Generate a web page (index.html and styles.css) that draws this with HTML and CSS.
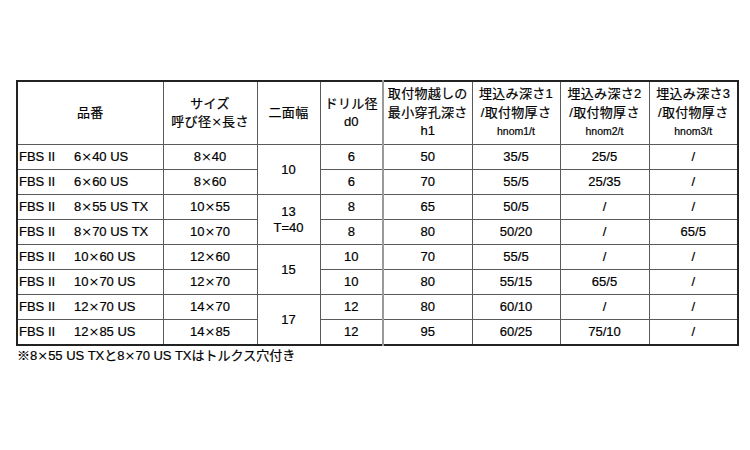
FILE: index.html
```html
<!DOCTYPE html>
<html lang="ja">
<head>
<meta charset="utf-8">
<link rel="stylesheet" href="styles.css">
</head>
<body>
<div class="wrap">
<table class="spec">
<colgroup>
<col class="c1"><col class="c2"><col class="c3"><col class="c4"><col class="c5"><col class="c6"><col class="c7"><col class="c8">
</colgroup>
<thead>
<tr>
<th>品番</th>
<th>サイズ<br>呼び径<span class="x">×</span>長さ</th>
<th>二面幅</th>
<th>ドリル径<br><span class="lat">d0</span></th>
<th class="sep">取付物越しの<br>最小穿孔深さ<br><span class="lat">h1</span></th>
<th>埋込み深さ1<br>/取付物厚さ<br><span class="sm">hnom1/t</span></th>
<th>埋込み深さ2<br>/取付物厚さ<br><span class="sm">hnom2/t</span></th>
<th>埋込み深さ3<br>/取付物厚さ<br><span class="sm">hnom3/t</span></th>
</tr>
</thead>
<tbody>
<tr><td class="name"><span class="fbs">FBS II</span>6<span class="x">×</span>40 US</td><td>8<span class="x">×</span>40</td><td rowspan="2">10</td><td>6</td><td class="sep">50</td><td>35/5</td><td>25/5</td><td>/</td></tr>
<tr><td class="name"><span class="fbs">FBS II</span>6<span class="x">×</span>60 US</td><td>8<span class="x">×</span>60</td><td>6</td><td class="sep">70</td><td>55/5</td><td>25/35</td><td>/</td></tr>
<tr><td class="name"><span class="fbs">FBS II</span>8<span class="x">×</span>55 US TX</td><td>10<span class="x">×</span>55</td><td rowspan="2">13<br>T=40</td><td>8</td><td class="sep">65</td><td>50/5</td><td>/</td><td>/</td></tr>
<tr><td class="name"><span class="fbs">FBS II</span>8<span class="x">×</span>70 US TX</td><td>10<span class="x">×</span>70</td><td>8</td><td class="sep">80</td><td>50/20</td><td>/</td><td>65/5</td></tr>
<tr><td class="name"><span class="fbs">FBS II</span>10<span class="x">×</span>60 US</td><td>12<span class="x">×</span>60</td><td rowspan="2">15</td><td>10</td><td class="sep">70</td><td>55/5</td><td>/</td><td>/</td></tr>
<tr><td class="name"><span class="fbs">FBS II</span>10<span class="x">×</span>70 US</td><td>12<span class="x">×</span>70</td><td>10</td><td class="sep">80</td><td>55/15</td><td>65/5</td><td>/</td></tr>
<tr><td class="name"><span class="fbs">FBS II</span>12<span class="x">×</span>70 US</td><td>14<span class="x">×</span>70</td><td rowspan="2">17</td><td>12</td><td class="sep">80</td><td>60/10</td><td>/</td><td>/</td></tr>
<tr><td class="name"><span class="fbs">FBS II</span>12<span class="x">×</span>85 US</td><td>14<span class="x">×</span>85</td><td>12</td><td class="sep">95</td><td>60/25</td><td>75/10</td><td>/</td></tr>
</tbody>
</table>
<p class="note">※8<span class="x">×</span>55 US TXと8<span class="x">×</span>70 US TXはトルクス穴付き</p>
</div>
</body>
</html>
```

FILE: styles.css
```css
html, body {
  margin: 0;
  padding: 0;
  background: #fff;
}
body {
  font-family: "Liberation Sans", "Noto Sans CJK JP", sans-serif;
  color: #000;
  font-size: 13px;
  -webkit-text-stroke: 0.2px #000;
}
.wrap {
  padding: 80px 0 0 16px;
}
.spec {
  border-collapse: collapse;
  table-layout: fixed;
  width: 722px;
  border: 2px solid #222;
}
.c1 { width: 146px; }
.c2 { width: 94px; }
.c3 { width: 63px; }
.c4 { width: 63px; }
.c5 { width: 89px; }
.c6 { width: 88px; }
.c7 { width: 89px; }
.c8 { width: 89px; }
.spec th, .spec td {
  border: 1px solid #5a5a5a;
  padding: 0;
  text-align: center;
  vertical-align: middle;
  font-weight: normal;
  line-height: 18.5px;
}
.spec th {
  height: 62px;
  letter-spacing: 0.3px;
}
.spec td {
  height: 24px;
  line-height: 16px;
}
.spec .sep {
  border-left: 2px solid #9a9a9a;
}
.spec td.name {
  text-align: left;
  padding-left: 1px;
}
.fbs {
  display: inline-block;
  width: 55px;
}
.x {
  font-family: "DejaVu Sans", sans-serif;
  letter-spacing: 0;
  -webkit-text-stroke: 0;
}
.lat {
  letter-spacing: 0;
}
.sm {
  font-size: 10.5px;
  letter-spacing: 0;
}
.note {
  margin: 2px 0 0 1px;
  font-size: 13px;
  line-height: 16px;
}
```
